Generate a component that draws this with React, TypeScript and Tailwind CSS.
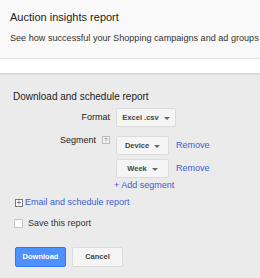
import { Plus } from "lucide-react";

function Caret() {
  return (
    <svg width="6" height="3" viewBox="0 0 6 3" className="ml-[5px] mt-[1px]">
      <path d="M0 0h6L3 3z" fill="#666" />
    </svg>
  );
}

function Menu({ label, w }: { label: string; w: string }) {
  return (
    <button
      type="button"
      className={`flex h-[19px] ${w} items-center justify-center rounded-[2px] border border-[#dcdcdc] bg-[#f5f5f5] text-[7.5px] font-bold text-[#444]`}
    >
      {label}
      <Caret />
    </button>
  );
}

export default function App() {
  return (
    <div className="flex h-[278px] w-[260px] flex-col overflow-hidden bg-[#ebebeb] font-['Liberation_Sans',Arial,sans-serif] text-[#222]">
      {/* ヘッダー */}
      <div className="h-[59px] shrink-0 whitespace-nowrap border-b border-[#e3e3e3] bg-[#f9f9f9] pl-[10px] pt-[11px]">
        <h1 className="text-[11px] leading-[13px] text-[#222]">Auction insights report</h1>
        <p className="mt-[9px] text-[9.1px] leading-[11px] text-[#333]">
          See how successful your Shopping campaigns and ad groups are
        </p>
      </div>
      <div className="h-[15px] shrink-0 border-b border-[#d6d6d6] bg-white shadow-[0_1px_1px_rgba(0,0,0,0.06)]" />

      <div className="px-[13px] pt-[17px]">
        <h2 className="text-[10px] leading-[12px] text-[#222]">Download and schedule report</h2>

        <div className="mt-[5px] grid grid-cols-[97px_auto] gap-x-[6px] text-[9px] leading-[11px]">
          <div className="pt-[4px] text-right">Format</div>
          <Menu label="Excel .csv" w="w-[60px]" />

          <div className="mt-[9px] flex justify-end">
            <span className="mt-[-1px]">Segment</span>
            <span className="ml-[6px] flex h-[8px] w-[8px] items-center justify-center border border-[#bbb] bg-[#f2f2f2] text-[6px] leading-none text-[#777]">
              ?
            </span>
          </div>
          <div className="mt-[9px] flex flex-col">
            <div className="flex items-center gap-[7px]">
              <Menu label="Device" w="w-[53px]" />
              <a className="text-[#3a5fcd]">Remove</a>
            </div>
            <div className="mt-[4px] flex items-center gap-[7px]">
              <Menu label="Week" w="w-[53px]" />
              <a className="text-[#3a5fcd]">Remove</a>
            </div>
            <a className="-ml-[2px] mt-[2px] text-[#3a5fcd]">+ Add segment</a>
          </div>
        </div>

        <div className="mt-[6px] flex items-center pl-[2px] text-[9px] leading-[11px] text-[#3a5fcd]">
          <span className="mr-[2px] flex h-[8px] w-[8px] items-center justify-center border border-[#777] bg-white">
            <Plus size={7} strokeWidth={2.5} color="#444" />
          </span>
          Email and schedule report
        </div>

        <label className="mt-[10px] flex items-center pl-[1px] text-[9px] leading-[11px] text-[#333]">
          <span className="mr-[5px] h-[9px] w-[9px] rounded-[1px] border border-[#c6c6c6] bg-white" />
          Save this report
        </label>

        <div className="mt-[18px] flex gap-[6px] pl-[2px]">
          <button
            type="button"
            className="h-[20px] w-[51px] rounded-[2px] border border-[#3079ed] bg-[#4d90fe] text-[7.5px] font-bold text-white"
          >
            Download
          </button>
          <button
            type="button"
            className="h-[20px] w-[51px] rounded-[2px] border border-[#dcdcdc] bg-[#f5f5f5] text-[7.5px] font-bold text-[#444]"
          >
            Cancel
          </button>
        </div>
      </div>
    </div>
  );
}
